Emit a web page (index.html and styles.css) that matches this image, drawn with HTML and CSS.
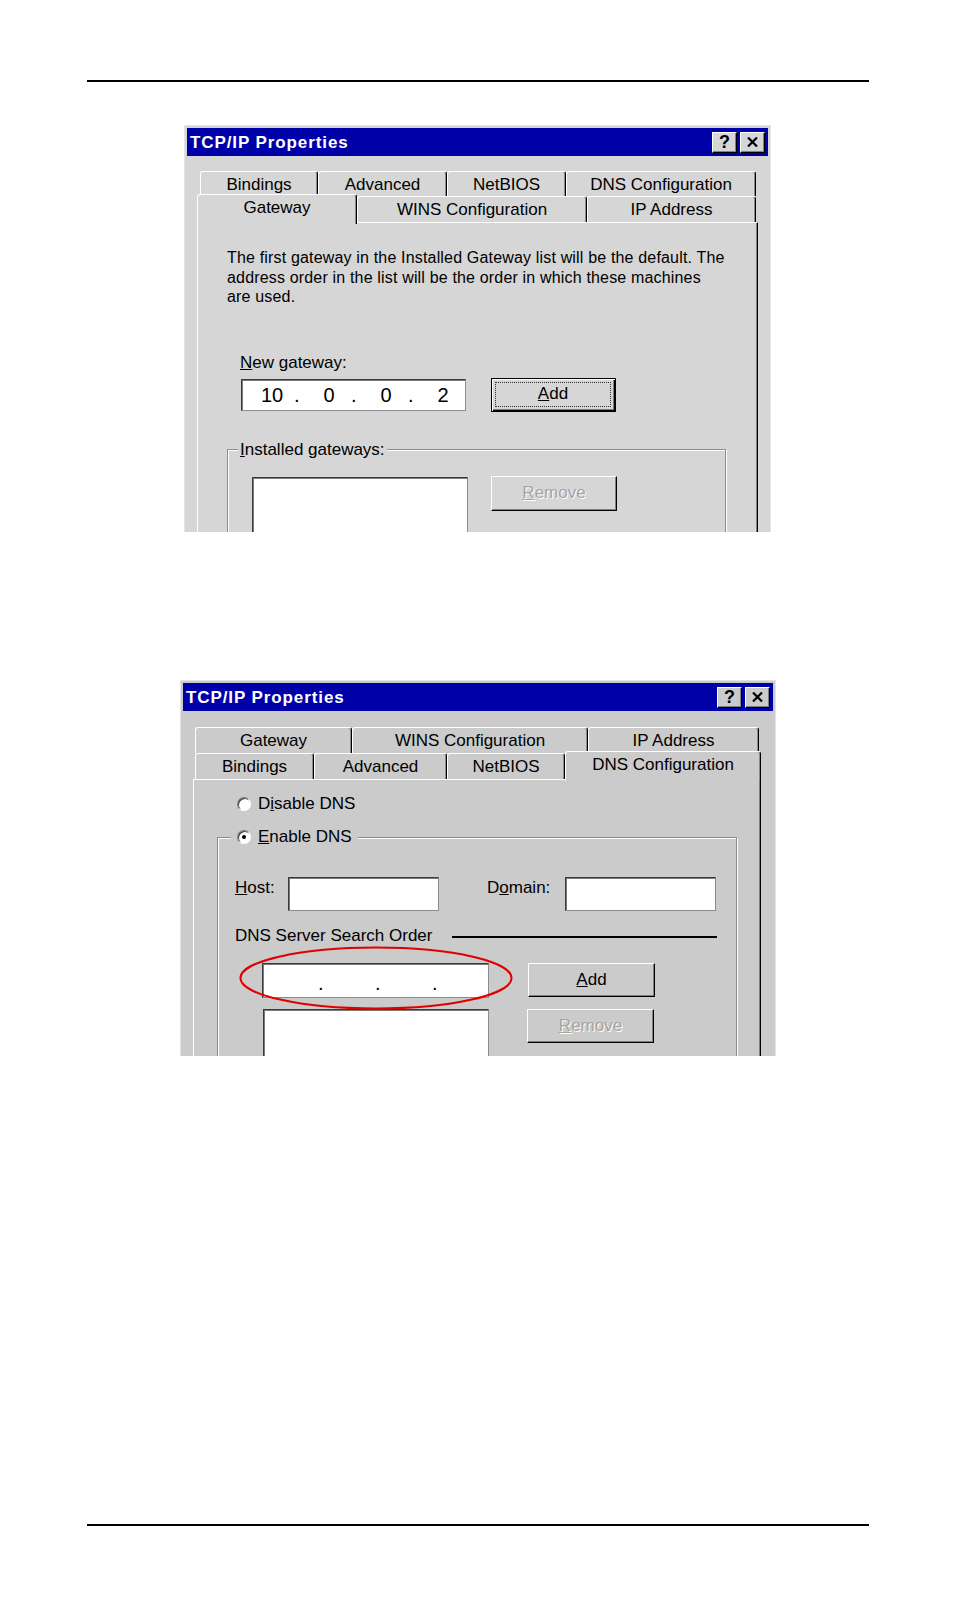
FILE: index.html
```html
<!DOCTYPE html>
<html>
<head>
<meta charset="utf-8">
<link rel="stylesheet" href="styles.css">
</head>
<body>
<div class="page">
  <div class="rule"></div>

  <div class="dlg d1">
    <div class="titlebar">
      <span class="title">TCP/IP Properties</span>
      <div class="tb-btns">
        <span class="tbb">?</span>
        <span class="tbb"><svg width="11" height="10" viewBox="0 0 11 10"><path d="M1 0.5 L10 9.5 M10 0.5 L1 9.5" stroke="#000" stroke-width="2.2" fill="none"/></svg></span>
      </div>
    </div>
    <div class="tabs">
      <div class="tabrow r1">
        <div class="tab w118">Bindings</div>
        <div class="tab w129">Advanced</div>
        <div class="tab w119">NetBIOS</div>
        <div class="tab w190">DNS Configuration</div>
      </div>
      <div class="tabrow r2">
        <div class="tab sel w160">Gateway</div>
        <div class="tab w230">WINS Configuration</div>
        <div class="tab w169">IP Address</div>
      </div>
    </div>
    <div class="panel p1">
      <p class="desc">The first gateway in the Installed Gateway list will be the default. The<br>address order in the list will be the order in which these machines<br>are used.</p>
      <div class="lbl newgw"><u>N</u>ew gateway:</div>
      <div class="row gwrow">
        <div class="field ip ip1"><span class="seg">10</span><span class="dot">.</span><span class="seg">0</span><span class="dot">.</span><span class="seg">0</span><span class="dot">.</span><span class="seg">2</span></div>
        <div class="btn default add1"><span class="focus"><u>A</u>dd</span></div>
      </div>
      <fieldset class="grp g1">
        <legend class="lbl"><u>I</u>nstalled gateways:</legend>
        <div class="row listrow1">
          <div class="field list1"></div>
          <div class="btn disabled rem1"><u>R</u>emove</div>
        </div>
      </fieldset>
    </div>
  </div>

  <div class="dlg d2">
    <div class="titlebar">
      <span class="title">TCP/IP Properties</span>
      <div class="tb-btns">
        <span class="tbb">?</span>
        <span class="tbb"><svg width="11" height="10" viewBox="0 0 11 10"><path d="M1 0.5 L10 9.5 M10 0.5 L1 9.5" stroke="#000" stroke-width="2.2" fill="none"/></svg></span>
      </div>
    </div>
    <div class="tabs">
      <div class="tabrow r1">
        <div class="tab w157">Gateway</div>
        <div class="tab w236">WINS Configuration</div>
        <div class="tab w171">IP Address</div>
      </div>
      <div class="tabrow r2">
        <div class="tab w119">Bindings</div>
        <div class="tab w133">Advanced</div>
        <div class="tab w118">NetBIOS</div>
        <div class="tab sel w196">DNS Configuration</div>
      </div>
    </div>
    <div class="panel p2">
      <div class="opt dis"><span class="radio"></span><span>D<u>i</u>sable DNS</span></div>
      <fieldset class="grp g2">
        <legend class="opt"><span class="radio on"><span class="pip"></span></span><span><u>E</u>nable DNS</span></legend>
        <div class="row hostrow">
          <span class="lbl host"><u>H</u>ost:</span>
          <div class="field hostin"></div>
          <span class="lbl domain">D<u>o</u>main:</span>
          <div class="field domin"></div>
        </div>
        <div class="row sorder"><span class="lbl">DNS Server Search Order</span><span class="hline"></span></div>
        <div class="row iprow">
          <div class="field ip ip2"><span class="seg"></span><span class="dot">.</span><span class="seg"></span><span class="dot">.</span><span class="seg"></span><span class="dot">.</span><span class="seg"></span></div>
          <div class="btn add2"><u>A</u>dd</div>
        </div>
        <div class="row listrow2">
          <div class="field list2"></div>
          <div class="btn disabled rem2"><u>R</u>emove</div>
        </div>
      </fieldset>
    </div>
    <svg class="mark" width="274" height="64" viewBox="0 0 274 64"><ellipse cx="137" cy="32" rx="135.5" ry="30.5" fill="none" stroke="#e00000" stroke-width="2"/></svg>
  </div>

  <div class="rule rule-bottom"></div>
</div>
</body>
</html>
```

FILE: styles.css
```css
* { box-sizing: border-box; }
html, body { margin: 0; padding: 0; background: #fff; }
body {
  width: 954px;
  height: 1612px;
  overflow: hidden;
  font-family: "Liberation Sans", Arial, sans-serif;
  color: #000;
}
.page { padding-top: 80px; }
.rule { height: 2px; background: #000; width: 782px; margin-left: 87px; }
.rule-bottom { margin-top: 468px; }

.dlg {
  position: relative;
  overflow: hidden;
  border: 1px solid #e4e4e4;
  border-bottom: 0;
  padding: 2px 2px 0;
  background: var(--bg);
}
.d1 { --bg: #d6d6d6; margin: 43px 0 0 184px; width: 587px; height: 407px; }
.d2 { --bg: #cbcbcb; margin: 148px 0 0 180px; width: 596px; height: 376px; }

.titlebar {
  height: 28px;
  background: #0000a8;
  display: flex;
  align-items: center;
  justify-content: space-between;
  padding: 0 3px;
}
.title { color: #fff; font-weight: bold; font-size: 17px; letter-spacing: 0.9px; margin-top: 2px; }
.tb-btns { display: flex; gap: 3px; }
.tbb {
  width: 25px;
  height: 21px;
  background: var(--bg);
  border: 1px solid;
  border-color: #fff #000 #000 #fff;
  box-shadow: inset -1px -1px 0 #808080;
  display: flex;
  align-items: center;
  justify-content: center;
  font-weight: bold;
  font-size: 18px;
  line-height: 1;
}

.tabs { display: flex; flex-direction: column; }
.d1 .tabs { margin: 15px 10px 0; }
.d2 .tabs { margin: 16px 12px 0 10px; }
.tabrow { display: flex; }
.d1 .r1 { height: 25px; padding-left: 3px; }
.d1 .r2 { height: 26px; }
.d2 .r1 { height: 26px; padding-left: 2px; }
.d2 .r2 { height: 26px; padding-left: 2px; }
.tab {
  flex: none;
  height: 100%;
  border-top: 1px solid #fff;
  border-left: 1px solid #fff;
  border-right: 1px solid #000;
  border-radius: 3px 3px 0 0;
  box-shadow: inset -1px 0 0 #8a8a8a;
  display: flex;
  align-items: center;
  justify-content: center;
  font-size: 17px;
  line-height: 20px;
  padding-top: 1px;
  background: var(--bg);
}
.tab.sel {
  height: 30px;
  margin-top: -2px;
  margin-bottom: -2px;
  padding-top: 0;
  padding-bottom: 3px;
  position: relative;
  z-index: 1;
}
.w118 { width: 118px; } .w129 { width: 129px; } .w119 { width: 119px; } .w190 { width: 190px; }
.w160 { width: 160px; } .w230 { width: 230px; } .w169 { width: 169px; }
.w157 { width: 157px; } .w236 { width: 236px; } .w171 { width: 171px; }
.w133 { width: 133px; } .w196 { width: 196px; }

.panel {
  border-top: 1px solid #fff;
  border-left: 1px solid #fff;
  border-right: 1px solid #000;
  box-shadow: inset -1px 0 0 #808080;
  height: 420px;
  font-size: 17px;
  line-height: 20px;
}
.p1 { margin: 0 10px; }
.p2 { margin: 0 12px 0 10px; }

.row { display: flex; }
.lbl { font-size: 17px; line-height: 20px; }

.field {
  background: #fff;
  border: 1px solid;
  border-color: #3a3a3a #8c8c8c #8c8c8c #3a3a3a;
  box-shadow: inset 1px 1px 0 #7a7a7a;
  flex: none;
}
.btn {
  flex: none;
  border: 1px solid;
  border-color: #fff #000 #000 #fff;
  box-shadow: inset -1px -1px 0 #808080;
  display: flex;
  align-items: center;
  justify-content: center;
  font-size: 17px;
  line-height: 20px;
}
.btn.default {
  border: 1px solid #000;
  box-shadow: inset 1px 1px 0 #fff, inset -1px -1px 0 #000, inset -2px -2px 0 #808080;
  padding: 3px 4px 4px 3px;
}
.focus {
  flex: 1;
  align-self: stretch;
  border: 1px dotted #333;
  display: flex;
  align-items: center;
  justify-content: center;
}
.btn.disabled { color: #a4a4a4; text-shadow: 1px 1px 0 #fff; }

.grp {
  margin: 0;
  padding: 0;
  min-inline-size: 0;
  border: 1px solid #8c8c8c;
  box-shadow: inset 1px 1px 0 #fff, 1px 1px 0 #fff;
  height: 300px;
}
.grp legend { padding: 0 2px; background: var(--bg); }

/* dialog 1 content */
.desc {
  margin: 25px 0 0 29px;
  font-size: 16px;
  line-height: 19.5px;
  letter-spacing: 0.17px;
}
.newgw { margin: 46px 0 0 42px; }
.gwrow { margin: 5px 0 0 43px; align-items: center; }
.ip { display: flex; align-items: center; font-size: 20px; line-height: 24px; }
.ip1 { width: 225px; height: 32px; padding-left: 8px; }
.seg { width: 44px; text-align: center; flex: none; }
.dot { width: 13px; flex: none; }
.add1 { width: 125px; height: 34px; margin-left: 25px; }
.g1 { margin: 28px 0 0 29px; width: 499px; }
.g1 legend { margin-left: 10px; }
.listrow1 { margin: 16px 0 0 24px; align-items: flex-start; }
.list1 { width: 216px; height: 90px; margin-top: 1px; }
.rem1 { width: 126px; height: 35px; margin-left: 23px; }

/* dialog 2 content */
.opt { display: flex; align-items: center; gap: 7px; height: 20px; }
.dis { margin: 14px 0 0 43px; }
.radio {
  width: 14px;
  height: 14px;
  border-radius: 50%;
  background: #fff;
  border: 1px solid;
  border-color: #7a7a7a #fff #fff #7a7a7a;
  box-shadow: inset 1px 1px 0 #303030;
  display: flex;
  align-items: center;
  justify-content: center;
  flex: none;
}
.pip { width: 4px; height: 4px; border-radius: 50%; background: #000; }
.g2 { margin: 13px 0 0 23px; width: 520px; }
.g2 legend { margin-left: 13px; padding: 0 6px; display: flex; }
.hostrow { margin: 30px 0 0 17px; align-items: flex-start; }
.host { width: 53px; flex: none; padding-top: 1px; }
.hostin, .domin { width: 151px; height: 34px; }
.domain { width: 78px; margin-left: 48px; flex: none; padding-top: 1px; }
.sorder { margin: 15px 0 0 17px; width: 482px; height: 20px; align-items: center; justify-content: space-between; }
.hline { width: 265px; height: 2px; background: #000; margin-top: 2px; }
.iprow { margin: 17px 0 0 44px; align-items: flex-start; }
.ip2 { width: 227px; height: 35px; padding-left: 11px; padding-top: 4px; }
.add2 { width: 127px; height: 34px; margin-left: 39px; }
.listrow2 { margin: 11px 0 0 45px; align-items: flex-start; }
.list2 { width: 226px; height: 90px; }
.rem2 { width: 127px; height: 34px; margin-left: 38px; }

.mark { position: absolute; left: 58px; top: 265px; }
```
